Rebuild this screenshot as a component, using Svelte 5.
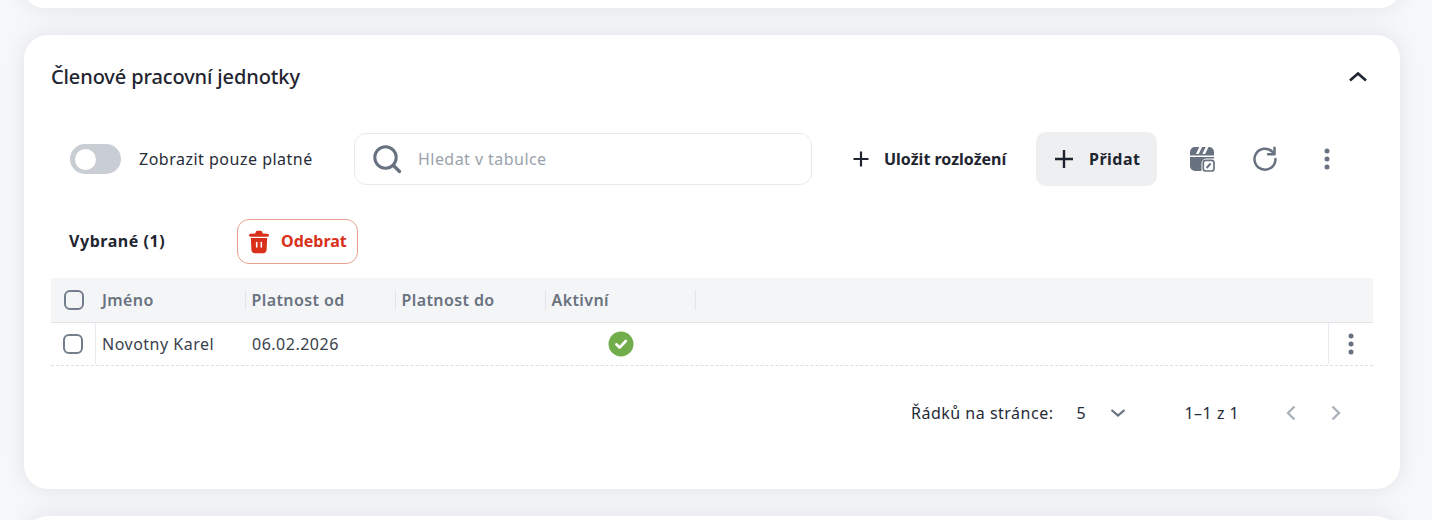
<script>
  const columns = [
    { label: "Jméno", width: 149 },
    { label: "Platnost od", width: 150 },
    { label: "Platnost do", width: 150 },
    { label: "Aktivní", width: 151 }
  ];
</script>

<div class="page">
  <section class="card stub"></section>

  <section class="card main">
    <header class="head">
      <h2>Členové pracovní jednotky</h2>
      <svg class="chevron" width="24" height="24" viewBox="0 0 24 24"><path d="M4 15.500 12 8.500l8 7" fill="none" stroke="#1f2530" stroke-width="2.600" /></svg>
    </header>

    <div class="toolbar">
      <div class="toggle"><span class="knob"></span></div>
      <span class="toggle-label">Zobrazit pouze platné</span>

      <div class="search">
        <svg width="30" height="30" viewBox="0 0 30 30"><circle cx="13.500" cy="13.500" r="10.700" fill="none" stroke="#67717f" stroke-width="3" /><path d="m21.500 21.500 6 6" stroke="#67717f" stroke-width="3.200" stroke-linecap="round" /></svg>
        <span class="placeholder">Hledat v tabulce</span>
      </div>

      <button class="btn-text">
        <svg width="18" height="18" viewBox="0 0 18 18"><path d="M9 1.500v15M1.500 9h15" stroke="#1f2530" stroke-width="2.200" /></svg>
        Uložit rozložení
      </button>

      <button class="btn-add">
        <svg width="24" height="24" viewBox="0 0 24 24"><path d="M12 3v18M3 12h18" stroke="#1f2530" stroke-width="2.400" /></svg>
        Přidat
      </button>

      <div class="tools">
        <svg width="26" height="26" viewBox="0 0 26 26">
          <path d="M1 9.500h24V6a5 5 0 0 0-5-5h-.5l-3.400 7h-2.800l3.400-7h-3.600L9.700 8H6.900l3.400-7H6a5 5 0 0 0-5 5z" fill="#67717f" />
          <path d="M1 11h24v1.500h-7.500a5 5 0 0 0-5 5V25H6a5 5 0 0 1-5-5z" fill="#67717f" />
          <rect x="14.300" y="14.300" width="10.700" height="10.700" rx="2.500" fill="none" stroke="#67717f" stroke-width="1.700" />
          <path d="m17.600 22 4-4.500" stroke="#67717f" stroke-width="2" />
        </svg>
        <svg width="26" height="26" viewBox="0 0 26 26"><path d="M20.500 5.800A10.500 10.500 0 1 0 23.500 13" fill="none" stroke="#67717f" stroke-width="2.500" stroke-linecap="round" /><path d="M22.500 1.800v6.400h-6.400" fill="none" stroke="#67717f" stroke-width="2.500" stroke-linecap="round" stroke-linejoin="round" /></svg>
        <svg class="dots" width="8" height="24" viewBox="0 0 8 24"><circle cx="4" cy="4" r="2.500" /><circle cx="4" cy="12" r="2.500" /><circle cx="4" cy="20" r="2.500" /></svg>
      </div>
    </div>

    <div class="selection">
      <span class="selected">Vybrané (1)</span>
      <button class="btn-remove">
        <svg width="22" height="24" viewBox="0 0 22 24">
          <path d="M7.500 3.400V2.800C7.500 1.600 8.400.8 9.500.8h3c1.100 0 2 .8 2 2v.6l4.900.4c1 .1 1.600.7 1.600 1.500s-.7 1.400-1.600 1.400H2.600C1.700 6.700 1 6.100 1 5.300s.6-1.400 1.600-1.500z" fill="#d9301a" />
          <path d="M2.800 8h16.400l-.6 11.800c-.1 2-1.500 3.400-3.500 3.400H6.900c-2 0-3.400-1.400-3.500-3.400z" fill="#d9301a" />
          <path d="M8.700 12.500v4.500M13.300 12.500v4.500" stroke="#fff" stroke-width="1.600" stroke-linecap="round" />
        </svg>
        <span>Odebrat</span>
      </button>
    </div>

    <div class="table">
      <div class="thead">
        <div class="check-cell"><span class="check"></span></div>
        {#each columns as col}
          <div class="th" style="width: {col.width}px">{col.label}</div>
        {/each}
      </div>
      <div class="tr">
        <div class="check-cell body-check"><span class="check"></span></div>
        <div class="td name">Novotny Karel</div>
        <div class="td date">06.02.2026</div>
        <div class="td empty"></div>
        <div class="td active">
          <svg width="26" height="26" viewBox="0 0 26 26"><circle cx="13" cy="13" r="12.500" fill="#72ad4b" /><path d="m8.300 13.300 3.300 3.200 6.200-6.500" fill="none" stroke="#fff" stroke-width="2.600" stroke-linecap="round" stroke-linejoin="round" /></svg>
        </div>
        <div class="row-menu">
          <svg class="dots" width="8" height="24" viewBox="0 0 8 24"><circle cx="4" cy="4" r="2.500" /><circle cx="4" cy="12" r="2.500" /><circle cx="4" cy="20" r="2.500" /></svg>
        </div>
      </div>
    </div>

    <div class="pager">
      <span>Řádků na stránce:</span>
      <span class="size">5</span>
      <svg class="size-arrow" width="16" height="10" viewBox="0 0 16 10"><path d="m1.500 2 6.500 5.500L14.500 2" fill="none" stroke="#67717f" stroke-width="2.200" /></svg>
      <span class="range">1–1 z 1</span>
      <svg class="prev" width="12" height="16" viewBox="0 0 12 16"><path d="M9.500 1.500 3 8l6.500 6.500" fill="none" stroke="#acb2ba" stroke-width="2.400" /></svg>
      <svg class="next" width="12" height="16" viewBox="0 0 12 16"><path d="M2.500 1.500 9 8l-6.500 6.500" fill="none" stroke="#acb2ba" stroke-width="2.400" /></svg>
    </div>
  </section>

  <section class="card stub-bottom"></section>
</div>

<style>
  :global(body) {
    background-color: #f7f8fa;
    font-family: "Noto Sans", sans-serif;
    color: #1f2530;
  }

  .page {
    height: 520px;
    overflow: hidden;
    box-sizing: border-box;
    padding: 0 32px 0 24px;
    display: flex;
    flex-direction: column;
    gap: 27px;
  }

  .card {
    background-color: #fff;
    border-radius: 24px;
    box-shadow: 0 0 24px rgba(130, 140, 165, 0.2);
    flex-shrink: 0;
  }

  .stub {
    height: 40px;
    margin-top: -32px;
  }

  .stub-bottom {
    height: 60px;
  }

  .main {
    height: 454px;
    box-sizing: border-box;
    padding: 0 27px;
  }

  .head {
    height: 84px;
    display: flex;
    align-items: center;
    justify-content: space-between;
  }

  h2 {
    margin: 0;
    font-size: 20px;
    font-weight: 500;
    line-height: 26px;
    letter-spacing: -0.12px;
  }

  .chevron {
    margin-right: 3px;
  }

  .toolbar {
    height: 54px;
    margin-top: 13px;
    display: flex;
    align-items: center;
    padding-left: 19px;
  }

  .toggle {
    width: 51px;
    height: 30px;
    border-radius: 15px;
    background-color: #c9cdd4;
    display: flex;
    align-items: center;
    padding-left: 5px;
    box-sizing: border-box;
  }

  .knob {
    width: 21px;
    height: 21px;
    border-radius: 50%;
    background-color: #fff;
  }

  .toggle-label {
    margin-left: 18px;
    font-size: 16px;
    letter-spacing: 0.5px;
    width: 215px;
    color: #262c38;
  }

  .search {
    width: 458px;
    height: 52px;
    box-sizing: border-box;
    border: 1px solid #e8eaee;
    border-radius: 12px;
    display: flex;
    align-items: center;
    padding-left: 17px;
    gap: 16px;
  }

  .placeholder {
    font-size: 16px;
    letter-spacing: 0.45px;
    color: #9aa2ab;
  }

  button {
    font-family: inherit;
    font-weight: 700;
    background: none;
    border: none;
    color: #1f2530;
    padding: 0;
    display: flex;
    align-items: center;
  }

  .btn-text {
    margin-left: 40px;
    font-size: 16px;
    gap: 14px;
    width: 155px;
    white-space: nowrap;
  }

  .btn-add {
    margin-left: 29px;
    width: 121px;
    height: 54px;
    border-radius: 10px;
    background-color: #eeeff1;
    font-size: 16px;
    letter-spacing: 0.5px;
    padding-left: 16px;
    gap: 13px;
  }

  .tools {
    margin-left: 32px;
    display: flex;
    align-items: center;
  }

  .tools svg:nth-child(2) {
    margin-left: 37px;
  }

  .tools .dots {
    margin-left: 45px;
  }

  .dots {
    fill: #67717f;
  }

  .selection {
    margin-top: 33px;
    height: 45px;
    display: flex;
    align-items: center;
    padding-left: 18px;
  }

  .selected {
    width: 168px;
    font-size: 16px;
    font-weight: 700;
    letter-spacing: 0.55px;
    padding-bottom: 2px;
  }

  .btn-remove {
    width: 121px;
    height: 45px;
    box-sizing: border-box;
    border: 1px solid #e9a093;
    border-radius: 12px;
    color: #d9301a;
    font-size: 16px;
    padding-left: 10px;
    gap: 11px;
  }

  .btn-remove span {
    padding-bottom: 2px;
  }

  .table {
    margin-top: 14px;
  }

  .thead {
    height: 45px;
    box-sizing: border-box;
    background-color: #f4f5f7;
    border-bottom: 1px solid #e1e4e8;
    display: flex;
    align-items: center;
  }

  .check-cell {
    width: 45px;
    flex-shrink: 0;
    display: flex;
    align-items: center;
    padding-left: 12px;
    box-sizing: border-box;
  }

  .check {
    width: 20px;
    height: 20px;
    box-sizing: border-box;
    border: 2px solid #737d8b;
    border-radius: 6px;
    background-color: transparent;
  }

  .thead .check-cell {
    padding-left: 13px;
  }

  .th {
    box-sizing: border-box;
    font-size: 16px;
    font-weight: 600;
    color: #69727f;
    height: 20px;
    line-height: 20px;
    padding-left: 5.500px;
    border-left: 1px solid #e2e4e8;
    letter-spacing: 0.4px;
  }

  .th:nth-child(2) {
    border-left: none;
    padding-left: 6px;
  }

  .th:last-child {
    border-right: 1px solid #e2e4e8;
  }

  .tr {
    height: 43px;
    box-sizing: border-box;
    border-bottom: 1px dashed #dcdfe3;
    display: flex;
    align-items: center;
  }

  .body-check {
    height: 100%;
    border-right: 1px solid #e8eaee;
  }

  .td {
    flex-shrink: 0;
    width: 150px;
    font-size: 16px;
    letter-spacing: 0.5px;
    color: #3a414c;
    box-sizing: border-box;
    padding-left: 6px;
  }

  .active {
    display: flex;
    padding-left: 62px;
  }

  .active svg {
    display: block;
  }

  .row-menu {
    margin-left: auto;
    width: 45px;
    height: 100%;
    box-sizing: border-box;
    border-left: 1px solid #e8eaee;
    display: flex;
    align-items: center;
    justify-content: center;
  }

  .pager {
    margin-top: 25px;
    height: 44px;
    display: flex;
    align-items: center;
    font-size: 16px;
    letter-spacing: 0.5px;
    color: #262c38;
    padding-left: 860px;
  }

  .size {
    margin-left: 23px;
    width: 10px;
  }

  .size-arrow {
    margin-left: 24px;
  }

  .range {
    margin-left: 58px;
  }

  .prev {
    margin-left: 46px;
  }

  .next {
    margin-left: 33px;
  }
</style>
